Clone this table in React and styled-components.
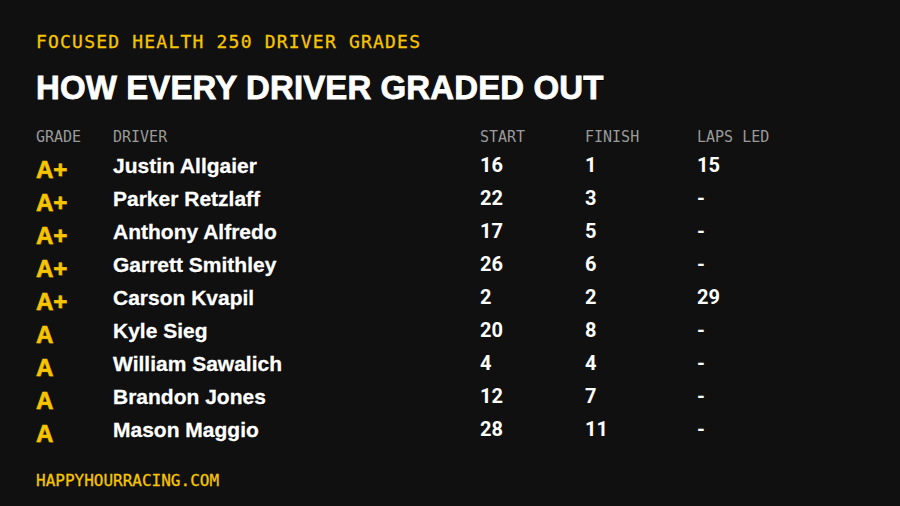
import React from "react"
import styled, { createGlobalStyle } from "styled-components"

const GlobalStyle = createGlobalStyle`
  html, body {
    margin: 0;
    padding: 0;
    background: #101010;
  }
`

const Yellow = "#f6c500"

const Page = styled.div`
  width: 900px;
  height: 506px;
  box-sizing: border-box;
  background: #101010;
  padding: 30px 36px 0;
  display: flex;
  flex-direction: column;
  font-family: "Liberation Sans", Arial, sans-serif;
`

const Kicker = styled.div`
  font-family: "DejaVu Sans Mono", "Liberation Mono", monospace;
  font-size: 18px;
  color: ${Yellow};
  letter-spacing: 1.2px;
  line-height: 24px;
  -webkit-text-stroke: 0.3px ${Yellow};
`

const Title = styled.h1`
  margin: 16px 0 0;
  font-size: 33px;
  line-height: 36px;
  font-weight: 900;
  color: #fff;
  letter-spacing: 0.1px;
  -webkit-text-stroke: 0.8px #fff;
  text-shadow: 1px 1px 0 #000;
`

const Table = styled.div`
  margin-top: 13px;
  display: grid;
  grid-template-columns: 77px 367px 105px 112px 1fr;
  grid-template-rows: 30px;
  grid-auto-rows: 33px;
`

const HeadCell = styled.div`
  font-family: "DejaVu Sans Mono", "Liberation Mono", monospace;
  font-size: 15px;
  color: #9a9a9a;
  line-height: 20px;
  padding-top: 8px;
`

const Grade = styled.div`
  font-size: 24px;
  font-weight: 900;
  color: ${Yellow};
  line-height: 33px;
  padding-top: 4px;
  -webkit-text-stroke: 0.6px ${Yellow};
  text-shadow: 1px 1px 0 #3a2d00;
`

const Name = styled.div`
  font-size: 21px;
  font-weight: 700;
  color: #fff;
  line-height: 33px;
  -webkit-text-stroke: 0.3px #fff;
  text-shadow: 1px 1px 0 #000;
`

const Num = styled.div`
  font-family: Roboto, "Liberation Sans", sans-serif;
  font-size: 20px;
  font-weight: 700;
  color: #fff;
  line-height: 33px;
`

const Footer = styled.div`
  margin-top: auto;
  margin-bottom: 14px;
  font-family: "DejaVu Sans Mono", "Liberation Mono", monospace;
  font-size: 16px;
  color: ${Yellow};
  line-height: 22px;
  -webkit-text-stroke: 0.3px ${Yellow};
`

const rows = [
  ["A+", "Justin Allgaier", "16", "1", "15"],
  ["A+", "Parker Retzlaff", "22", "3", "-"],
  ["A+", "Anthony Alfredo", "17", "5", "-"],
  ["A+", "Garrett Smithley", "26", "6", "-"],
  ["A+", "Carson Kvapil", "2", "2", "29"],
  ["A", "Kyle Sieg", "20", "8", "-"],
  ["A", "William Sawalich", "4", "4", "-"],
  ["A", "Brandon Jones", "12", "7", "-"],
  ["A", "Mason Maggio", "28", "11", "-"],
]

const App = () => (
  <>
    <GlobalStyle />
    <Page>
      <Kicker>FOCUSED HEALTH 250 DRIVER GRADES</Kicker>
      <Title>HOW EVERY DRIVER GRADED OUT</Title>
      <Table>
        <HeadCell>GRADE</HeadCell>
        <HeadCell>DRIVER</HeadCell>
        <HeadCell>START</HeadCell>
        <HeadCell>FINISH</HeadCell>
        <HeadCell>LAPS LED</HeadCell>
        {rows.map(r => (
          <React.Fragment key={r[1]}>
            <Grade>{r[0]}</Grade>
            <Name>{r[1]}</Name>
            <Num>{r[2]}</Num>
            <Num>{r[3]}</Num>
            <Num>{r[4]}</Num>
          </React.Fragment>
        ))}
      </Table>
      <Footer>HAPPYHOURRACING.COM</Footer>
    </Page>
  </>
)

export default App
